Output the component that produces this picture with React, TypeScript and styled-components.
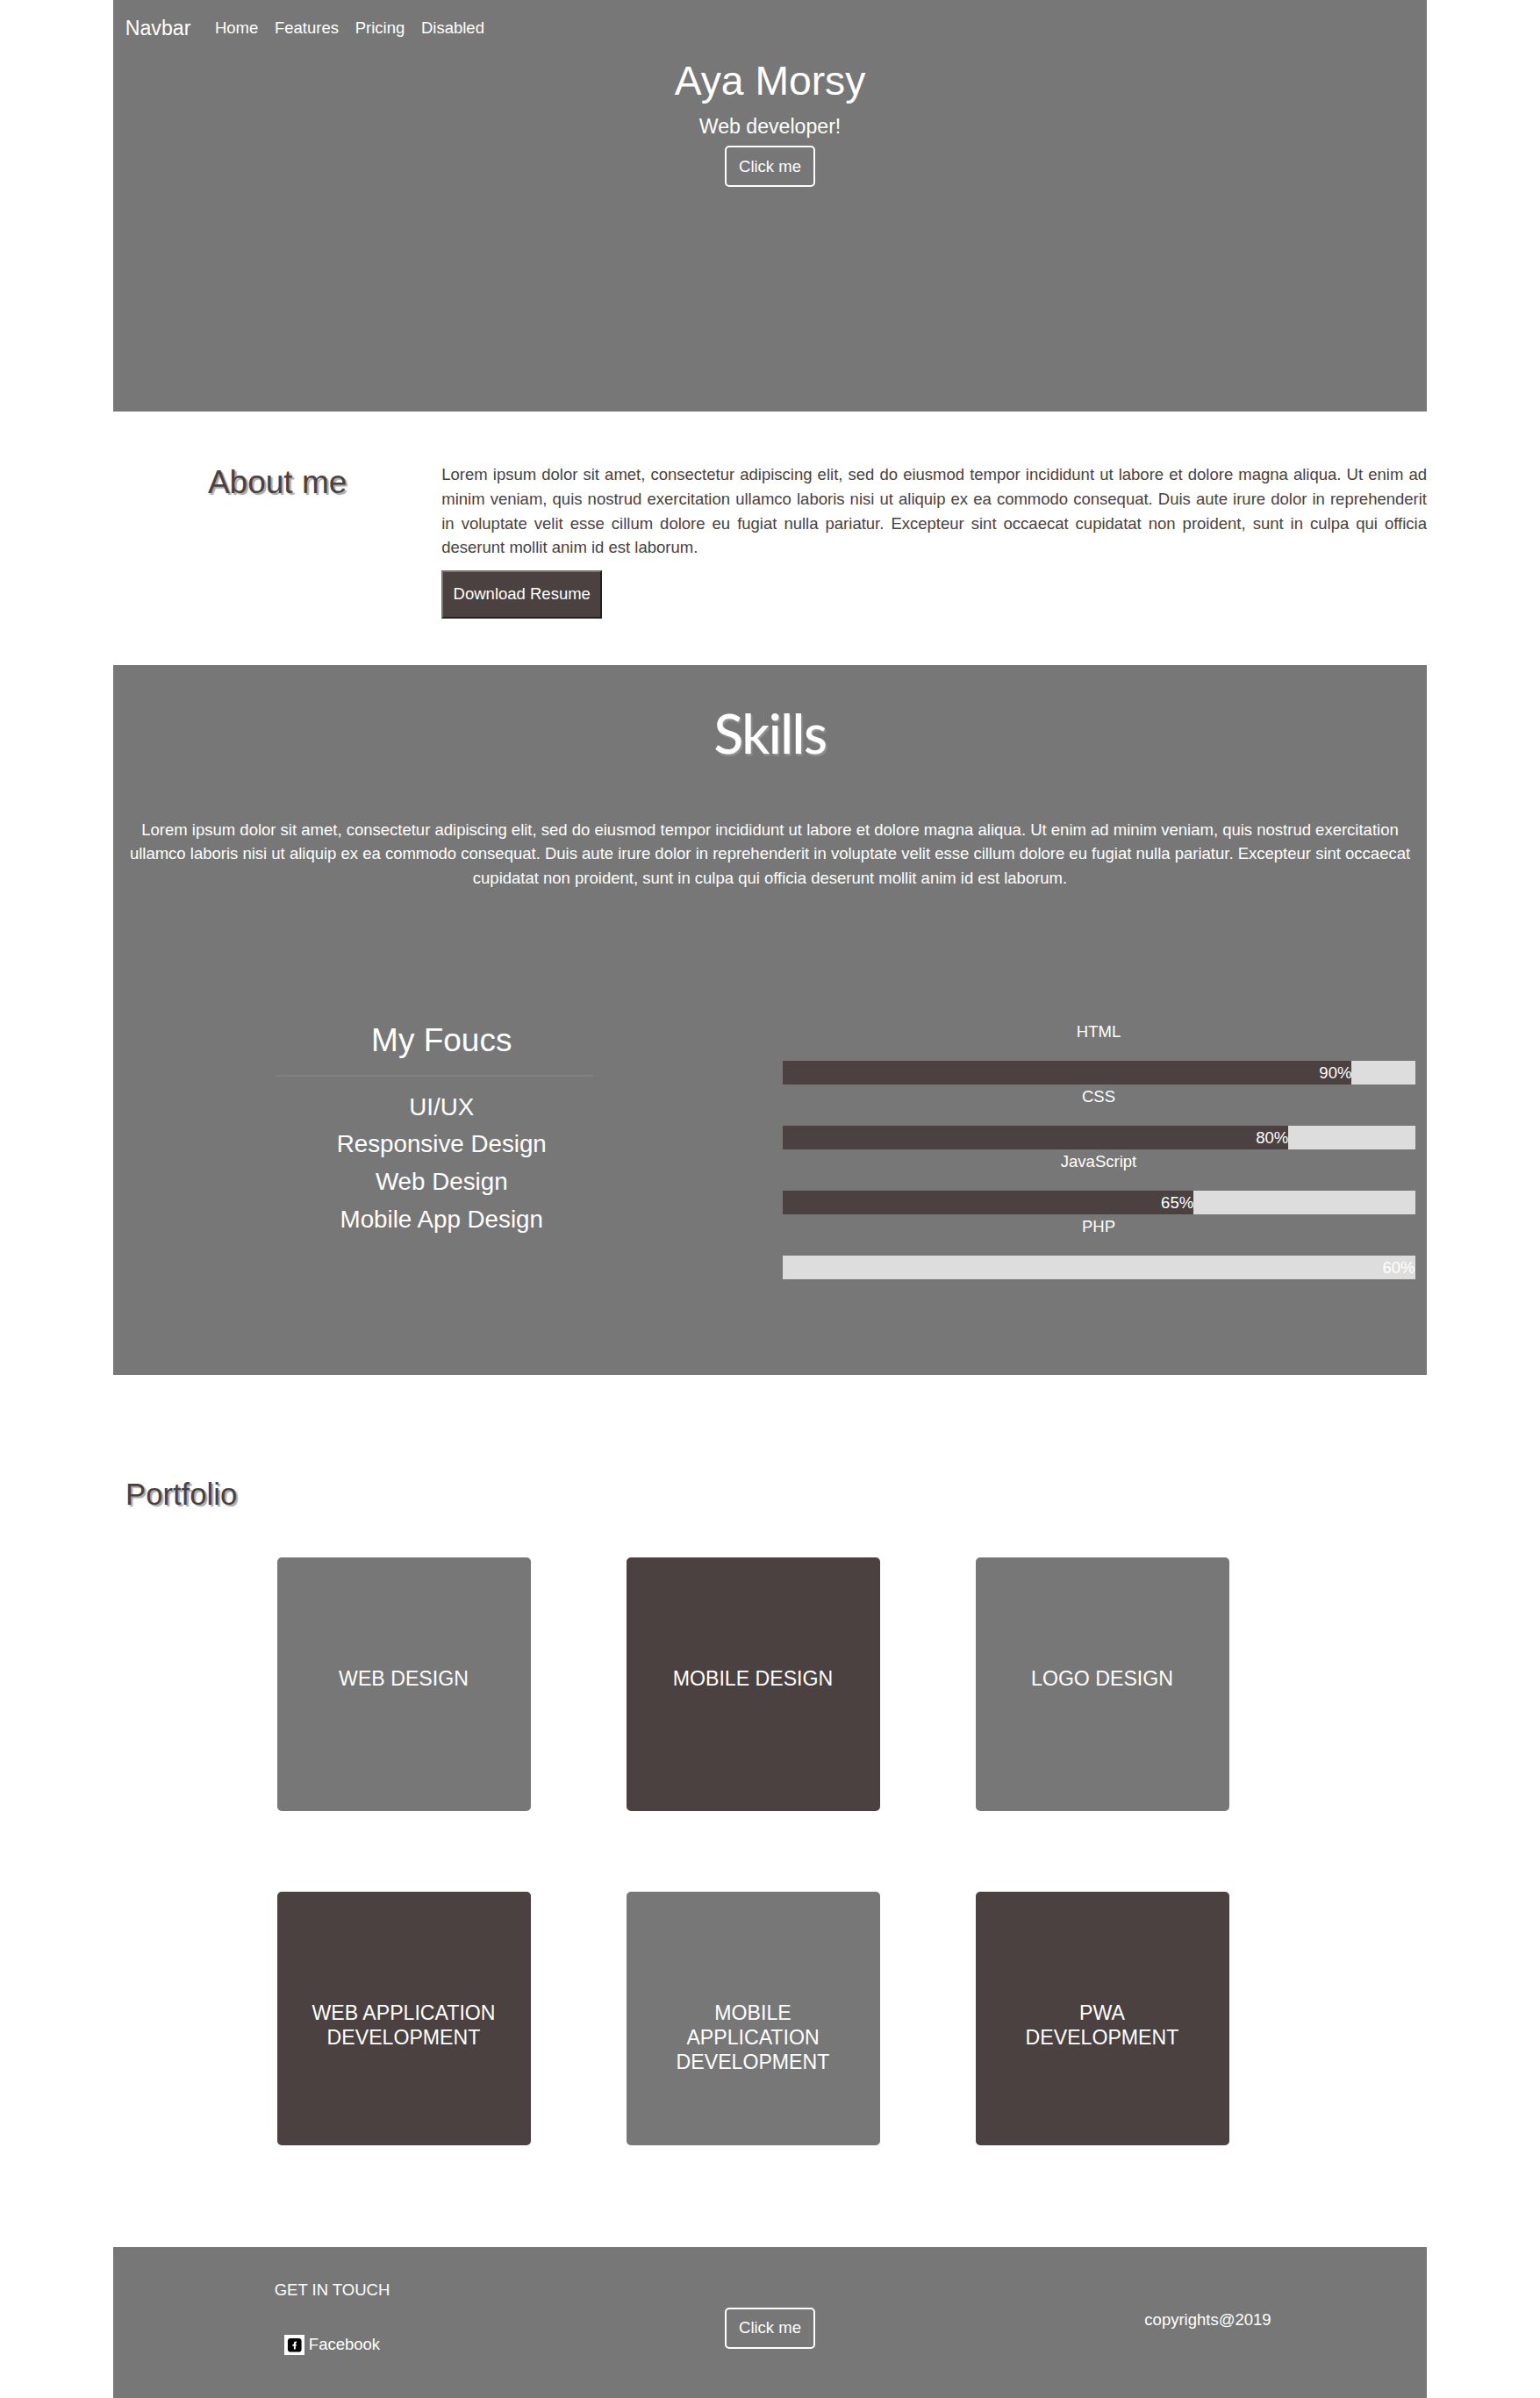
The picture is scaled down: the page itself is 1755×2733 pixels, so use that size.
import React from "react";
import styled, { createGlobalStyle } from "styled-components";

const GREY = "#777777";
const DARK = "#4a4140";

const GlobalStyle = createGlobalStyle`
  *, *::before, *::after { box-sizing: border-box; }
  body {
    margin: 0;
    background: #fff;
    font-family: "Liberation Sans", Arial, sans-serif;
    font-size: 18.5px;
    line-height: 27.75px;
    color: ${DARK};
  }
  h1, h2, h3, p, ul { margin: 0; padding: 0; font-weight: 400; }
  ul { list-style: none; }
`;

const Page = styled.div`
  width: 1497px;
  margin: 0 auto;
  height: 2733px;
  display: flex;
  flex-direction: column;
`;

const Hero = styled.header`
  height: 469px;
  background: ${GREY};
  color: #fff;
  display: flex;
  flex-direction: column;
`;

const Navbar = styled.nav`
  height: 65px;
  padding-left: 13.8px;
  display: flex;
  align-items: center;
`;

const Brand = styled.a`
  font-size: 23.13px;
  margin-right: 27.6px;
`;

const NavLinks = styled.div`
  display: flex;
  gap: 18.7px;
  padding-bottom: 1.5px;
`;

const Intro = styled.div`
  display: flex;
  flex-direction: column;
  align-items: center;
`;

const Name = styled.h1`
  font-size: 46.27px;
  line-height: 55.5px;
`;

const Role = styled.p`
  font-size: 23.13px;
  line-height: 27.75px;
  margin-top: 10px;
`;

const OutlineButton = styled.button`
  width: 103px;
  height: 46.5px;
  border: 2px solid #fff;
  border-radius: 5px;
  background: transparent;
  color: #fff;
  font: inherit;
  padding: 0;
`;

const IntroButton = styled(OutlineButton)`
  margin-top: 8px;
`;

const About = styled.section`
  height: 289px;
  padding-top: 58px;
  display: grid;
  grid-template-columns: 374.25px 1fr;
  align-items: start;
`;

const ShadowTitle = styled.h2<{ $size: number }>`
  font-size: ${(p) => p.$size}px;
  line-height: 44px;
  text-shadow: 2.3px 2.3px 1px #aaa;
`;

const AboutTitle = styled(ShadowTitle)`
  padding-top: 1px;
  text-align: center;
`;

const AboutText = styled.p`
  text-align: justify;
`;

const ResumeButton = styled.button`
  display: block;
  width: 183px;
  height: 55.5px;
  margin-top: 11.5px;
  padding: 0;
  border: 2px outset #767676;
  background: ${DARK};
  color: #fff;
  font: inherit;
`;

const Skills = styled.section`
  height: 808.5px;
  background: ${GREY};
  color: #fff;
  text-align: center;
`;

const SkillsTitle = styled.h2`
  padding-top: 40px;
  font-family: Lato, sans-serif;
  font-size: 62px;
  font-weight: 500;
  line-height: 75px;
  letter-spacing: -1.5px;
  text-shadow: 1.5px 1.5px 2px #999;
`;

const SkillsText = styled.p`
  padding: 0 17px;
  margin-top: 58.5px;
`;

const SkillColumns = styled.div`
  margin-top: 134px;
  display: grid;
  grid-template-columns: 1fr 1fr;
`;

const Focus = styled.div`
  display: flex;
  flex-direction: column;
  align-items: center;
`;

const FocusTitle = styled.h2`
  font-size: 37px;
  line-height: 44px;
  margin-top: 15px;
`;

const Rule = styled.hr`
  width: 361px;
  margin: 17px 15px 18px 0;
  border: 0;
  border-top: 2px solid #828282;
`;

const FocusItem = styled.li`
  font-size: 27.75px;
  line-height: 33.5px;
  margin-bottom: 9.1px;
`;

const Bars = styled.div`
  padding: 13.5px 13.5px 0 14px;
`;

const SkillName = styled.p`
  margin-bottom: 18.5px;
`;

const Track = styled.div`
  height: 27.75px;
  background: #ddd;
`;

const Fill = styled.div<{ $bare: boolean }>`
  height: 100%;
  text-align: right;
  background: ${(p) => (p.$bare ? "transparent" : DARK)};
  color: #fff;
`;

const Portfolio = styled.section`
  height: 994px;
  padding: 114px 0 0 14px;
`;

const Cards = styled.div`
  margin: 50px 0 0 172.5px;
  display: grid;
  grid-template-columns: repeat(3, 289px);
  column-gap: 109px;
  row-gap: 92.5px;
`;

const Card = styled.div<{ $dark: boolean }>`
  height: 289px;
  border-radius: 5px;
  padding: 125px 30px 0;
  background: ${(p) => (p.$dark ? DARK : GREY)};
  color: #fff;
  font-size: 23.13px;
  line-height: 27.75px;
  text-align: center;
`;

const Footer = styled.footer`
  flex: 1;
  background: ${GREY};
  color: #fff;
  display: grid;
  grid-template-columns: repeat(3, 499px);
  justify-items: center;
  align-items: start;
`;

const Contact = styled.div`
  padding-top: 35px;
  display: flex;
  flex-direction: column;
  align-items: center;
  gap: 34.5px;
`;

const Social = styled.a`
  display: flex;
  gap: 4.5px;
`;

const FooterButton = styled(OutlineButton)`
  margin-top: 69.5px;
`;

const Copyright = styled.p`
  padding-top: 69px;
`;

const FacebookIcon = styled.svg`
  width: 23.5px;
  height: 23.5px;
  margin-top: 3px;
`;

const LOREM =
  "Lorem ipsum dolor sit amet, consectetur adipiscing elit, sed do eiusmod tempor incididunt ut labore et dolore magna aliqua. Ut enim ad minim veniam, quis nostrud exercitation ullamco laboris nisi ut aliquip ex ea commodo consequat. Duis aute irure dolor in reprehenderit in voluptate velit esse cillum dolore eu fugiat nulla pariatur. Excepteur sint occaecat cupidatat non proident, sunt in culpa qui officia deserunt mollit anim id est laborum.";

const skills = [
  { name: "HTML", label: "90%", width: 90 },
  { name: "CSS", label: "80%", width: 80 },
  { name: "JavaScript", label: "65%", width: 65 },
  { name: "PHP", label: "60%", width: 100, bare: true },
];

const cards = [
  "WEB DESIGN",
  "MOBILE DESIGN",
  "LOGO DESIGN",
  "WEB APPLICATION DEVELOPMENT",
  "MOBILE APPLICATION DEVELOPMENT",
  "PWA DEVELOPMENT",
];

export default function App() {
  return (
    <>
      <GlobalStyle />
      <Page>
        <Hero>
          <Navbar>
            <Brand>Navbar</Brand>
            <NavLinks>
              {["Home", "Features", "Pricing", "Disabled"].map((t) => (
                <a key={t}>{t}</a>
              ))}
            </NavLinks>
          </Navbar>
          <Intro>
            <Name>Aya Morsy</Name>
            <Role>Web developer!</Role>
            <IntroButton>Click me</IntroButton>
          </Intro>
        </Hero>
        <About>
          <AboutTitle $size={37}>About me</AboutTitle>
          <div>
            <AboutText>{LOREM}</AboutText>
            <ResumeButton>Download Resume</ResumeButton>
          </div>
        </About>
        <Skills>
          <SkillsTitle>Skills</SkillsTitle>
          <SkillsText>{LOREM}</SkillsText>
          <SkillColumns>
            <Focus>
              <FocusTitle>My Foucs</FocusTitle>
              <Rule />
              <ul>
                {["UI/UX", "Responsive Design", "Web Design", "Mobile App Design"].map((t) => (
                  <FocusItem key={t}>{t}</FocusItem>
                ))}
              </ul>
            </Focus>
            <Bars>
              {skills.map((s) => (
                <div key={s.name}>
                  <SkillName>{s.name}</SkillName>
                  <Track>
                    <Fill $bare={!!s.bare} style={{ width: `${s.width}%` }}>
                      {s.label}
                    </Fill>
                  </Track>
                </div>
              ))}
            </Bars>
          </SkillColumns>
        </Skills>
        <Portfolio>
          <ShadowTitle $size={34.7}>Portfolio</ShadowTitle>
          <Cards>
            {cards.map((t, i) => (
              <Card key={t} $dark={i % 2 === 1}>
                {t}
              </Card>
            ))}
          </Cards>
        </Portfolio>
        <Footer>
          <Contact>
            <p>GET IN TOUCH</p>
            <Social>
              <FacebookIcon viewBox="0 0 24 24">
                <rect width="24" height="24" fill="#fff" />
                <rect x="4" y="4" width="16" height="16" rx="3.5" fill="#000" />
                <path
                  d="M14.2 8.6h-.9c-.9 0-1.2.4-1.2 1.3v7M9.6 12h4.4"
                  fill="none"
                  stroke="#fff"
                  strokeWidth="2"
                />
              </FacebookIcon>
              <span>Facebook</span>
            </Social>
          </Contact>
          <FooterButton>Click me</FooterButton>
          <Copyright>copyrights@2019</Copyright>
        </Footer>
      </Page>
    </>
  );
}
